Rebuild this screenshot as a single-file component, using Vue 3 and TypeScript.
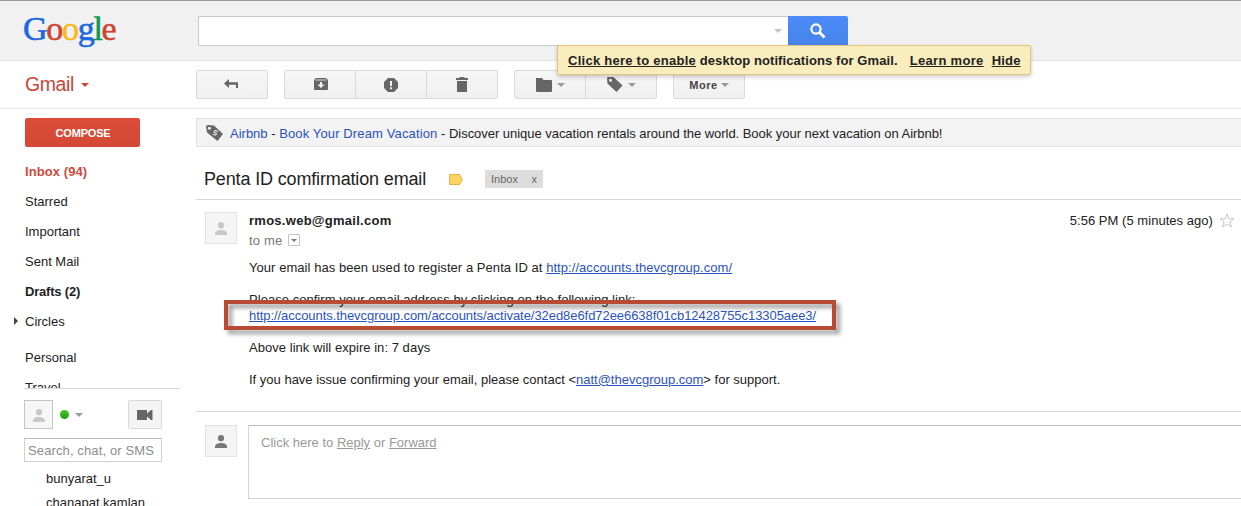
<script setup lang="ts">
interface Folder {
  id: string
  label: string
  tone?: string
  arrow?: boolean
}

const logo: { ch: string; tone: string }[] = [
  { ch: 'G', tone: 'blue' },
  { ch: 'o', tone: 'red' },
  { ch: 'o', tone: 'yellow' },
  { ch: 'g', tone: 'blue' },
  { ch: 'l', tone: 'green' },
  { ch: 'e', tone: 'red' },
]

const folders: Folder[] = [
  { id: 'inbox', label: 'Inbox (94)', tone: 'active' },
  { id: 'starred', label: 'Starred' },
  { id: 'important', label: 'Important' },
  { id: 'sent', label: 'Sent Mail' },
  { id: 'drafts', label: 'Drafts (2)', tone: 'strong' },
  { id: 'circles', label: 'Circles', arrow: true },
  { id: 'personal', label: 'Personal', tone: 'gap' },
  { id: 'travel', label: 'Travel' },
]

const contacts: string[] = ['bunyarat_u', 'chanapat.kamlan']
</script>

<template>
  <div class="page">
    <header class="top">
      <div class="logo">
        <span v-for="(l, i) in logo" :key="i" :class="l.tone">{{ l.ch }}</span>
      </div>
      <div class="search"><i class="caret pale"></i></div>
      <button class="search-btn" aria-label="Search">
        <svg width="16" height="16" viewBox="0 0 16 16"><circle cx="6" cy="6" r="4.6" fill="none" stroke="#fff" stroke-width="2.2" /><path d="M9.3 9.3L14.6 14.6" stroke="#fff" stroke-width="2.8" /></svg>
      </button>
    </header>

    <div class="toolbar">
      <div class="brand"><span>Gmail</span><i class="caret red-caret"></i></div>
      <div class="group">
        <button class="btn back"><svg width="14" height="10" viewBox="0 0 14 10"><path d="M0 4.5L5 0V3.3H14V9H12V5.7H5V9Z" fill="#666" /></svg></button>
      </div>
      <div class="group">
        <button class="btn archive"><svg width="14" height="12" viewBox="0 0 14 12"><path d="M2 0H12L14 2V11Q14 12 13 12H1Q0 12 0 11V2Z" fill="#666" /><path d="M1.5 2H12.5" stroke="#ddd" stroke-width="1" /><path d="M6 4H8V6.5H10.5L7 10L3.5 6.5H6Z" fill="#f5f5f5" /></svg></button>
        <button class="btn"><svg width="14" height="14" viewBox="0 0 14 14"><path d="M4 0H10L14 4V10L10 14H4L0 10V4Z" fill="#666" /><path d="M6 3H8V8H6ZM6 9.3H8V11.3H6Z" fill="#f5f5f5" /></svg></button>
        <button class="btn"><svg width="12" height="15" viewBox="0 0 12 15"><path d="M0 1H3.5V0H8.5V1H12V3H0ZM1 4H11V15H1Z" fill="#666" /></svg></button>
      </div>
      <div class="group">
        <button class="btn drop"><svg width="16" height="14" viewBox="0 0 16 14"><path d="M0 0H6L7.5 2H15Q16 2 16 3V13Q16 14 15 14H1Q0 14 0 13Z" fill="#666" /></svg><i class="caret"></i></button>
        <button class="btn drop"><svg width="16" height="15" viewBox="0 0 16 15"><path d="M0 1Q0 0 1 0H6.5L15.5 8.5L9.5 15L.5 6.5Z" fill="#666" /><circle cx="3.5" cy="3.3" r="1.5" fill="#f5f5f5" /></svg><i class="caret"></i></button>
      </div>
      <div class="group">
        <button class="btn more"><span>More</span><i class="caret"></i></button>
      </div>
    </div>

    <div class="body">
      <aside class="side">
        <button class="compose">COMPOSE</button>
        <nav class="folders">
          <div v-for="f in folders" :key="f.id" class="folder" :class="[f.tone, f.id]">
            <i v-if="f.arrow" class="expand"></i><span>{{ f.label }}</span>
          </div>
        </nav>
        <section class="chat">
          <div class="chat-head">
            <div class="me"><svg width="12" height="13" viewBox="0 0 12 13"><circle cx="6" cy="3.2" r="3.1" fill="#c8c8c8" /><path d="M0 13V11Q1 8 6 8T12 11V13Z" fill="#c8c8c8" /></svg></div>
            <i class="online"></i><i class="caret"></i>
            <button class="video"><svg width="16" height="10" viewBox="0 0 16 10"><path d="M0 0H10V3.5L14 0H15.5V10H14L10 6.5V10H0Z" fill="#666" /></svg></button>
          </div>
          <div class="chat-search"><span>Search, chat, or SMS</span></div>
          <div v-for="c in contacts" :key="c" class="contact"><span>{{ c }}</span></div>
        </section>
      </aside>

      <main class="main">
        <div class="ad">
          <svg width="17" height="16" viewBox="0 0 17 16"><path d="M0 2Q0 0 2 0L8 .5L17 9L11.5 16L1 7.5Z" fill="#666" /><circle cx="3.4" cy="3.3" r="1.5" fill="#f3f3f3" /><path d="M11.8 6.8Q9.8 4.8 8.6 5.9Q7.6 7.2 9.2 7.8Q11 8.3 10 9.6Q8.8 10.6 7 8.8" fill="none" stroke="#f3f3f3" stroke-width="1.1" /></svg>
          <p><a>Airbnb</a> - <a class="ad-title">Book Your Dream Vacation</a> - <span class="ad-copy">Discover unique vacation rentals around the world. Book your next vacation on Airbnb!</span></p>
        </div>
        <div class="subject">
          <h1>Penta ID comfirmation email</h1>
          <svg width="14" height="11" viewBox="0 0 14 11"><path d="M.5 .5H10.5L13.5 5.5L10.5 10.5H.5Z" fill="#fcd462" stroke="#e3b344" /></svg>
          <div class="tag"><span>Inbox</span><span>x</span></div>
        </div>
        <article class="mail">
          <div class="avatar"><svg width="12" height="13" viewBox="0 0 12 13"><circle cx="6" cy="3.2" r="3.1" fill="#c8c8c8" /><path d="M0 13V11Q1 8 6 8T12 11V13Z" fill="#c8c8c8" /></svg></div>
          <div class="content">
            <div class="from"><b>rmos.web@gmail.com</b><span class="time">5:56 PM (5 minutes ago)</span><svg width="16" height="15" viewBox="0 0 16 15"><path d="M8 1L9.8 5.8H15L10.9 8.9L12.4 14L8 11L3.6 14L5.1 8.9L1 5.8H6.2Z" fill="#fff" stroke="#c5c5c5" stroke-width="1" /></svg></div>
            <div class="to"><span>to me</span><div class="details"><i class="caret dark"></i></div></div>
            <div class="letter">
              <p class="p1">Your email has been used to register a Penta ID at <a>http://accounts.thevcgroup.com/</a></p>
              <p class="p2">Please confirm your email address by clicking on the following link:</p>
              <p class="p3"><a>http://accounts.thevcgroup.com/accounts/activate/32ed8e6fd72ee6638f01cb12428755c13305aee3/</a></p>
              <p class="p4">Above link will expire in: 7 days</p>
              <p class="p5">If you have issue confirming your email, please contact &lt;<a>natt@thevcgroup.com</a>&gt; for support.</p>
              <div class="highlight"></div>
            </div>
          </div>
        </article>
        <div class="reply">
          <div class="avatar"><svg width="12" height="13" viewBox="0 0 12 13"><circle cx="6" cy="3.2" r="3.1" fill="#777" /><path d="M0 13V11Q1 8 6 8T12 11V13Z" fill="#777" /></svg></div>
          <div class="reply-box"><span>Click here to <u>Reply</u> or <u>Forward</u></span></div>
        </div>
      </main>
    </div>

    <div class="notice"><span class="n1"><u>Click here to enable</u> desktop notifications for Gmail.</span><u class="n2">Learn more</u><u class="n3">Hide</u></div>
  </div>
</template>

<style>
body {
  overflow: hidden;
  background: #fff;
}
</style>

<style scoped>
* {
  box-sizing: border-box;
}
.page {
  position: relative;
  width: 1241px;
  height: 506px;
  overflow: hidden;
  display: flex;
  flex-direction: column;
  background: #fff;
  font-family: "Liberation Sans", Arial, sans-serif;
  font-size: 13px;
  color: #222;
  white-space: nowrap;
}
p, h1 {
  margin: 0;
}
button {
  font: inherit;
  padding: 0;
  margin: 0;
}
svg {
  display: block;
  flex: none;
}
.caret {
  flex: none;
  width: 0;
  height: 0;
  border: 4px solid transparent;
  border-top-color: #999;
  border-bottom: 0;
}
.pale {
  border-top-color: #c4c4c4;
}
.dark {
  border-width: 3px 3px 0;
  border-top-color: #777;
}
.top {
  height: 61px;
  flex: none;
  display: flex;
  align-items: flex-start;
  background: #f1f1f1;
  border-top: 1px solid #999;
  border-bottom: 1px solid #e3e3e3;
}
.logo {
  width: 198px;
  padding-left: 23px;
  margin-top: 9px;
  font-family: "Liberation Serif", serif;
  font-size: 34px;
  line-height: 38px;
  letter-spacing: -1.3px;
  -webkit-text-stroke: 0.6px currentColor;
}
.blue { color: #1d68e0; }
.red { color: #cf4332; }
.yellow { color: #f9b91c; }
.green { color: #0a9a52; }
.search {
  width: 590px;
  height: 30px;
  margin-top: 15px;
  display: flex;
  align-items: center;
  justify-content: flex-end;
  padding-right: 6px;
  background: #fff;
  border: 1px solid #c9c9c9;
  border-right: 0;
}
.search-btn {
  width: 60px;
  height: 30px;
  margin-top: 15px;
  display: flex;
  align-items: center;
  justify-content: center;
  border: 0;
  border-radius: 0 2px 2px 0;
  background: linear-gradient(#4d8cf9, #4583ea);
}
.toolbar {
  height: 48px;
  flex: none;
  display: flex;
  align-items: center;
  gap: 16px;
  border-bottom: 1px solid #e3e3e3;
}
.brand {
  width: 180px;
  padding-left: 25px;
  display: flex;
  align-items: center;
  gap: 7px;
  font-size: 19.5px;
  letter-spacing: -0.4px;
  color: #cb4437;
}
.red-caret {
  border-top-color: #cb4437;
}
.group {
  display: flex;
  border: 1px solid #dadada;
  border-radius: 2px;
  background: linear-gradient(#f6f6f6, #f0f0f0);
}
.btn {
  width: 70px;
  height: 27px;
  display: flex;
  align-items: center;
  justify-content: center;
  border: 0;
  background: none;
  color: #444;
}
.btn + .btn {
  width: 71px;
  border-left: 1px solid #dadada;
}
.back {
  padding: 0 2px 1px 0;
}
.archive {
  padding-left: 2px;
  padding-bottom: 1px;
}
.drop {
  gap: 5px;
}
.more {
  gap: 3px;
  font-size: 11px;
  font-weight: bold;
  letter-spacing: 0.6px;
}
.body {
  flex: 1;
  min-height: 0;
  display: flex;
}
.side {
  width: 196px;
  flex: none;
  padding-top: 9px;
}
.compose {
  display: block;
  width: 115px;
  height: 29px;
  margin-left: 25px;
  padding-left: 1px;
  border: 0;
  border-radius: 2px;
  background: linear-gradient(#dc4c3a, #d34836);
  color: #fff;
  font-size: 11px;
  font-weight: bold;
  letter-spacing: -0.2px;
}
.folders {
  height: 241px;
  padding-top: 9px;
  overflow: hidden;
}
.folder {
  height: 30px;
  display: flex;
  align-items: center;
  padding-left: 25px;
}
.active {
  color: #cf4a3d;
  font-weight: bold;
  letter-spacing: 0.08px;
}
.strong {
  font-weight: bold;
  letter-spacing: -0.2px;
}
.gap {
  margin-top: 6px;
}
.circles {
  padding-left: 14px;
}
.expand {
  width: 0;
  height: 0;
  margin-right: 7px;
  border: 4px solid transparent;
  border-left-color: #444;
  border-right: 0;
}
.chat {
  width: 156px;
  margin-left: 24px;
  border-top: 1px solid #d8d8d8;
}
.chat-head {
  display: flex;
  align-items: center;
  width: 138px;
  margin-top: 11px;
  height: 29px;
}
.me {
  width: 29px;
  height: 29px;
  display: flex;
  justify-content: center;
  align-items: center;
  padding-top: 2px;
  border: 1px solid #c5c5c5;
  background: #f7f7f7;
}
.online {
  width: 9px;
  height: 9px;
  margin: 0 6px 0 7px;
  border-radius: 50%;
  background: linear-gradient(#4cc82c, #1f9c10);
}
.video {
  width: 34px;
  height: 29px;
  margin-left: auto;
  display: flex;
  align-items: center;
  justify-content: center;
  border: 1px solid #d9d9d9;
  border-radius: 2px;
  background: #f4f4f4;
}
.chat-search {
  width: 138px;
  height: 24px;
  margin: 9px 0 5px;
  padding-left: 3px;
  line-height: 23px;
  border: 1px solid #d0d0d0;
  border-top-color: #b9b9b9;
  color: #8d8d8d;
  letter-spacing: 0.12px;
}
.contact {
  height: 24px;
  line-height: 24px;
  padding-left: 22px;
}
.main {
  flex: 1;
  min-width: 0;
  padding-top: 9px;
}
.ad {
  height: 29px;
  display: flex;
  align-items: center;
  padding-left: 9px;
  gap: 7px;
  background: #f3f3f3;
  border: 1px solid #e2e2e2;
  border-right: 0;
}
.ad p {
  padding-top: 2px;
}
.ad a {
  color: #2a52be;
}
.ad-title {
  letter-spacing: 0.13px;
}
.ad-copy {
  letter-spacing: -0.035px;
}
.subject {
  height: 53px;
  display: flex;
  align-items: center;
  padding: 12px 0 0 8px;
  border-bottom: 1px solid #d8d8d8;
}
h1 {
  width: 245px;
  font-size: 18px;
  font-weight: normal;
  letter-spacing: -0.15px;
}
.tag {
  width: 58px;
  height: 18px;
  margin-left: 22px;
  padding: 0 6px;
  display: flex;
  align-items: center;
  justify-content: space-between;
  background: #ddd;
  color: #666;
  font-size: 11px;
}
.mail {
  height: 212px;
  display: flex;
  gap: 12px;
  padding: 12px 0 0 9px;
  border-bottom: 1px solid #d8d8d8;
}
.avatar {
  width: 32px;
  height: 32px;
  flex: none;
  display: flex;
  align-items: center;
  justify-content: center;
  background: #f5f5f5;
  border: 1px solid #e2e2e2;
}
.content {
  flex: 1;
}
.from {
  height: 16px;
  display: flex;
  align-items: center;
  padding-right: 6px;
}
.from b {
  letter-spacing: 0.27px;
}
.time {
  margin-left: auto;
  margin-right: 6px;
  letter-spacing: 0.04px;
}
.to {
  height: 24px;
  display: flex;
  align-items: center;
  gap: 5px;
  color: #777;
  letter-spacing: 0.2px;
}
.details {
  width: 12px;
  height: 12px;
  display: flex;
  align-items: center;
  justify-content: center;
  border: 1px solid #c4c4c4;
  border-radius: 1px;
}
.letter {
  position: relative;
  margin-top: 8px;
  line-height: 16px;
}
.letter a {
  color: #2a52be;
  text-decoration: underline;
}
.p1 {
  letter-spacing: 0.055px;
}
.p2, .p4, .p5 {
  margin-top: 16px;
}
.p2, .p4 {
  letter-spacing: 0.04px;
}
.p3 {
  letter-spacing: -0.06px;
}
.highlight {
  position: absolute;
  left: -25px;
  top: 40px;
  width: 612px;
  height: 30px;
  border: 4px solid #b94a33;
  filter: drop-shadow(4px 4px 2px rgba(0, 0, 0, 0.4));
}
.reply {
  display: flex;
  gap: 11px;
  padding: 13px 0 0 9px;
}
.reply-box {
  flex: 1;
  height: 74px;
  padding: 9px 12px;
  border: 1px solid #d4d4d4;
  border-top-color: #bcbcbc;
  border-right: 0;
  color: #999;
}
.notice {
  position: absolute;
  left: 557px;
  top: 45px;
  width: 474px;
  height: 30px;
  display: flex;
  align-items: center;
  padding-left: 10px;
  background: #f9edbe;
  border: 1px solid #e3c27c;
  border-radius: 2px;
  box-shadow: 0 2px 4px rgba(0, 0, 0, 0.2);
  font-weight: bold;
}
.n1 {
  letter-spacing: 0.09px;
}
.n1 u {
  letter-spacing: 0.26px;
}
.n2 {
  margin-left: 12px;
  letter-spacing: 0.32px;
}
.n3 {
  margin-left: 8px;
  letter-spacing: 0.2px;
}
</style>
